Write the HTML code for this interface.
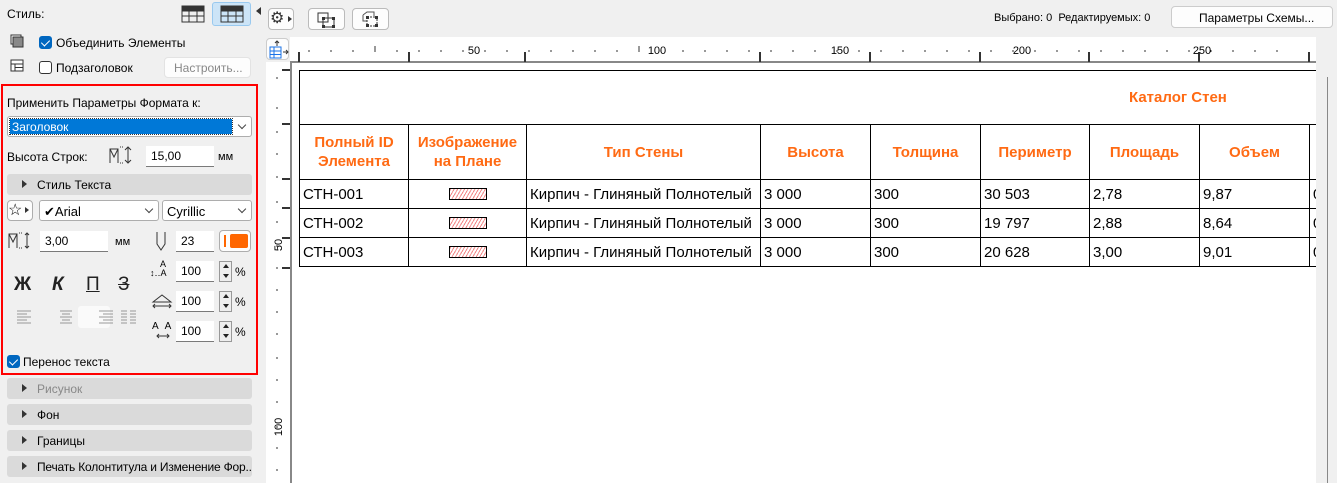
<!DOCTYPE html>
<html><head><meta charset="utf-8"><style>
*{box-sizing:border-box;margin:0;padding:0}
body{width:1337px;height:483px;overflow:hidden;background:#f0f0f0;font-family:"Liberation Sans",sans-serif;font-size:12px;color:#000;position:relative}
.a{position:absolute}
.inp{position:absolute;background:#fff;border-bottom:1px solid #7a7a7a;padding:3px 0 0 5px;font-size:12px;height:21px}
.sel{position:absolute;background:#fff;border:1px solid #adadad;border-radius:3px;height:21px;padding:3px 0 0 4px}
.sel:after{content:"";position:absolute;right:6px;top:5px;width:5px;height:5px;border-right:1px solid #444;border-bottom:1px solid #444;transform:rotate(45deg)}
.cb{position:absolute;width:13px;height:13px;border:1px solid #333;border-radius:3px;background:#fff}
.cb.on{background:#0067c0;border-color:#0067c0}
.cb.on:after{content:"";position:absolute;left:3px;top:1px;width:4px;height:7px;border-right:1.5px solid #fff;border-bottom:1.5px solid #fff;transform:rotate(45deg)}
.sec{position:absolute;left:7px;width:245px;height:21px;background:#dadada;border-radius:3px;padding:4px 0 0 30px;white-space:nowrap;overflow:hidden}
.sec:before{content:"";position:absolute;left:15px;top:6px;border-left:5px solid #333;border-top:4px solid transparent;border-bottom:4px solid transparent}
.spin{position:absolute;width:13px;height:21px;border:1px solid #999;background:#eee}
.spin:before{content:"";position:absolute;left:3px;top:2px;border-bottom:4px solid #222;border-left:3px solid transparent;border-right:3px solid transparent}
.spin:after{content:"";position:absolute;left:3px;top:12px;border-top:4px solid #222;border-left:3px solid transparent;border-right:3px solid transparent}
.btn{position:absolute;background:#fdfdfd;border:1px solid #ccc;border-radius:4px}
table{position:absolute;left:299px;top:70px;border-collapse:collapse;font-size:15px;table-layout:fixed}
td{border:1.5px solid #000;padding:0 3px;white-space:nowrap;overflow:hidden}
.h td{color:#ff6a13;font-weight:bold;font-size:15px;text-align:center;line-height:19px}
.r td{height:29px}
.hat{display:block;margin:0 auto;width:38px;height:12px;border:1px solid #000;background:repeating-linear-gradient(-60deg,#fff 0 2px,#f48a8a 2px 3px)}
</style></head><body>
<div class="a" style="left:7px;top:7px">Стиль:</div>
<svg class="a" style="left:181px;top:5px" width="24" height="18"><g fill="none" stroke="#333"><rect x="1" y="1" width="22" height="16"/><path d="M1 6h22M1 11h22M8 1v16M16 1v16"/></g><rect x="1" y="1" width="22" height="5" fill="#333"/></svg>
<div class="a" style="left:212px;top:2px;width:39px;height:24px;background:#cce4f7;border:1px solid #99c9ef;border-radius:3px"></div>
<svg class="a" style="left:220px;top:5px" width="24" height="18"><g fill="none" stroke="#333"><rect x="1" y="1" width="22" height="16"/><path d="M1 6h22M1 11h22M8 6v11M16 6v11"/></g><rect x="1" y="1" width="22" height="5" fill="#333"/></svg>
<svg class="a" style="left:10px;top:34px" width="14" height="14"><rect x="1" y="1" width="10" height="9" fill="#fff" stroke="#333"/><rect x="3" y="3" width="10" height="10" fill="#888" stroke="#333"/></svg>
<div class="cb on" style="left:39px;top:36px"></div><div class="a" style="left:56px;top:36px">Объединить Элементы</div>
<svg class="a" style="left:10px;top:59px" width="14" height="13"><rect x="1" y="1" width="12" height="11" fill="#fff" stroke="#333"/><path d="M1 5h12M5 5v7M5 8.5h8" stroke="#333" fill="none"/></svg>
<div class="cb" style="left:39px;top:61px"></div><div class="a" style="left:56px;top:61px">Подзаголовок</div>
<div class="btn" style="left:164px;top:57px;width:87px;height:21px;color:#888;padding:3px 0 0 9px;border-color:#e3e3e3">Настроить...</div>
<div class="a" style="left:1px;top:84px;width:257px;height:291px;border:2px solid #f00"></div>
<div class="a" style="left:7px;top:96px">Применить Параметры Формата к:</div>
<div class="sel" style="left:7px;top:116px;width:245px;height:21px;padding:2px"><div style="background:#0078d7;color:#fff;width:222px;height:15px;padding:1px 0 0 2px;outline:1px dotted #333">Заголовок</div></div>
<div class="a" style="left:7px;top:150px">Высота Строк:</div>
<svg class="a" style="left:108px;top:145px" width="26" height="20"><path d="M2 18V4h8v14M2 4l4 8 4-8" fill="none" stroke="#333"/><path d="M12 2h3M12 18h3" stroke="#333" stroke-dasharray="1 1"/><path d="M20 2v16M17 5l3-3 3 3M17 15l3 3 3-3" fill="none" stroke="#333"/></svg>
<div class="inp" style="left:146px;top:146px;width:68px">15,00</div>
<div class="a" style="left:218px;top:151px;font-size:11px">мм</div>
<div class="sec" style="top:174px">Стиль Текста</div>
<div class="btn" style="left:7px;top:200px;width:26px;height:21px;border-color:#adadad"></div>
<div class="a" style="left:8px;top:200px;font-size:16px">☆</div><div class="a" style="left:25px;top:207px;border-left:4px solid #333;border-top:3px solid transparent;border-bottom:3px solid transparent"></div>
<div class="sel" style="left:39px;top:200px;width:120px;font-size:13px">✔Arial</div>
<div class="sel" style="left:162px;top:200px;width:90px;font-size:13px">Cyrillic</div>
<svg class="a" style="left:7px;top:231px" width="26" height="18"><path d="M2 17V3h8v14M2 3l4 8 4-8" fill="none" stroke="#333"/><path d="M12 2h3M12 17h3" stroke="#333" stroke-dasharray="1 1"/><path d="M20 2v15M18 4l2-2 2 2M18 15l2 2 2-2" fill="none" stroke="#333"/></svg>
<div class="inp" style="left:40px;top:231px;width:68px">3,00</div>
<div class="a" style="left:115px;top:236px;font-size:11px">мм</div>
<svg class="a" style="left:155px;top:231px" width="12" height="20"><path d="M2 1v12l4 6 4-6V1" fill="none" stroke="#333"/></svg>
<div class="inp" style="left:176px;top:231px;width:38px">23</div>
<div class="btn" style="left:219px;top:230px;width:32px;height:22px;border-color:#adadad"><div class="a" style="left:4px;top:4px;width:2px;height:12px;background:#f60"></div><div class="a" style="left:10px;top:3px;width:18px;height:14px;background:#f60;border-radius:2px"></div></div>
<div class="a" style="left:14px;top:274px;font-size:19px;font-weight:bold;color:#222">Ж</div>
<div class="a" style="left:52px;top:274px;font-size:19px;font-weight:bold;font-style:italic;color:#222">К</div>
<div class="a" style="left:86px;top:274px;font-size:19px;color:#222;text-decoration:underline">П</div>
<div class="a" style="left:118px;top:274px;font-size:19px;color:#222;text-decoration:line-through">З</div>
<div class="a" style="left:78px;top:306px;width:32px;height:22px;background:#fafafa;border-radius:3px"></div>
<svg class="a" style="left:15px;top:310px" width="125" height="14" stroke="#999"><path d="M2 1h14M2 4h10M2 7h14M2 10h10M2 13h14M45 1h12M47 4h8M45 7h12M47 10h8M45 13h12M84 1h14M88 4h10M84 7h14M88 10h10M84 13h14M106 1h6M106 4h6M106 7h6M106 10h6M106 13h6M115 1h6M115 4h6M115 7h6M115 10h6M115 13h6"/></svg>
<div class="a" style="left:150px;top:260px;font-size:9px;line-height:9px">&nbsp;&nbsp;&nbsp;&nbsp;A<br>↕‥A</div>
<svg class="a" style="left:151px;top:293px" width="22" height="16"><path d="M2 9L11 2l9 7z" fill="none" stroke="#333"/><path d="M2 13h18M4 11l-2 2 2 2M18 11l2 2-2 2" fill="none" stroke="#333"/></svg>
<div class="a" style="left:152px;top:321px;font-size:10px;letter-spacing:6px">AA</div><svg class="a" style="left:156px;top:332px" width="14" height="8"><path d="M1 4h12M3 2L1 4l2 2M11 2l2 2-2 2" fill="none" stroke="#333"/></svg>
<div class="inp" style="left:176px;top:261px;width:38px">100</div><div class="spin" style="left:219px;top:261px"></div><div class="a" style="left:235px;top:265px">%</div>
<div class="inp" style="left:176px;top:291px;width:38px">100</div><div class="spin" style="left:219px;top:291px"></div><div class="a" style="left:235px;top:295px">%</div>
<div class="inp" style="left:176px;top:321px;width:38px">100</div><div class="spin" style="left:219px;top:321px"></div><div class="a" style="left:235px;top:325px">%</div>
<div class="cb on" style="left:7px;top:355px"></div><div class="a" style="left:23px;top:355px">Перенос текста</div>
<div class="sec" style="top:378px;color:#888">Рисунок</div>
<div class="sec" style="top:404px">Фон</div>
<div class="sec" style="top:430px">Границы</div>
<div class="sec" style="top:456px;letter-spacing:-0.2px">Печать Колонтитула и Изменение Фор...</div>
<div class="a" style="left:256px;top:7px;border-right:5px solid #333;border-top:4px solid transparent;border-bottom:4px solid transparent"></div>
<div class="btn" style="left:268px;top:8px;width:26px;height:22px;border-color:#bbb"></div><div class="a" style="left:270px;top:8px;font-size:16px;color:#333">⚙</div><div class="a" style="left:288px;top:16px;border-left:4px solid #333;border-top:3px solid transparent;border-bottom:3px solid transparent"></div>
<div class="btn" style="left:308px;top:8px;width:37px;height:22px;border-color:#bbb"></div>
<svg class="a" style="left:317px;top:12px" width="20" height="16"><rect x="1" y="1" width="10" height="9" fill="none" stroke="#333"/><rect x="6" y="6" width="11" height="9" fill="none" stroke="#333"/><g fill="#333"><rect x="5" y="5" width="3" height="3"/><rect x="15" y="5" width="3" height="3"/><rect x="5" y="13" width="3" height="3"/><rect x="15" y="13" width="3" height="3"/></g></svg>
<div class="btn" style="left:352px;top:8px;width:37px;height:22px;border-color:#bbb"></div>
<svg class="a" style="left:361px;top:11px" width="20" height="17"><path d="M2 4l4-3h7v4M2 4v6h4" fill="none" stroke="#555"/><rect x="6" y="6" width="10" height="9" fill="none" stroke="#333" stroke-dasharray="2 1"/><g fill="#333"><rect x="5" y="5" width="3" height="3"/><rect x="14" y="5" width="3" height="3"/><rect x="5" y="13" width="3" height="3"/><rect x="14" y="13" width="3" height="3"/></g></svg>
<div class="a" style="left:994px;top:12px;font-size:11px">Выбрано: 0&nbsp; Редактируемых: 0</div>
<div class="btn" style="left:1171px;top:6px;width:162px;height:22px;border-color:#ccc;padding:4px 0 0 27px;font-size:12px">Параметры Схемы...</div>
<div class="a" style="left:290px;top:37px;width:1026px;height:446px;background:#fff"></div>
<div class="a" style="left:266px;top:62px;width:24px;height:421px;background:#fff"></div>
<div class="btn" style="left:266px;top:38px;width:23px;height:22px;border-color:#ccc"></div>
<svg class="a" style="left:268px;top:40px" width="22" height="20"><path d="M9 1v5M7 3l2-2 2 2" stroke="#333" fill="none"/><rect x="2" y="7" width="11" height="11" fill="none" stroke="#1a73e8"/><path d="M2 11h11M2 14.5h11M6 7v11" stroke="#1a73e8"/><path d="M15 12h5M18 10l2 2-2 2" stroke="#333" fill="none"/></svg>
<div class="a" style="left:291px;top:61px;width:1025px;height:2px;background:#888"></div>
<div class="a" style="left:290px;top:61px;width:2px;height:422px;background:#888"></div>
<svg class="a" style="left:290px;top:37px" width="1026" height="25">
<g stroke="#333" stroke-width="1">
<path d="M19 13v2M41 13v2M63 13v2M85 9v6M107 13v2M129 13v2M151 13v2M173 13v2M195 13v2M217 13v2M239 13v2M261 13v2M283 13v2M305 13v2M327 13v2M349 9v6M371 13v2M393 13v2M415 13v2M437 13v2M459 13v2M481 13v2M503 13v2M525 13v2M547 13v2M569 13v2M591 13v2M613 13v2M635 13v2M657 13v2M679 13v2M701 13v2M723 13v2M745 13v2M767 13v2M789 13v2M811 13v2M833 13v2M855 13v2M877 13v2M899 13v2M921 13v2M943 13v2M965 13v2M987 13v2"/>
</g>
<g stroke="#333" stroke-width="2"><path d="M9 15v10M119 15v10M235 15v10M470 15v10M580 15v10M690 15v10M799 15v10M909 15v10M1019 15v10"/></g>
<g font-size="11" font-family="Liberation Sans" text-anchor="middle"><text x="184" y="17">50</text><text x="367" y="17">100</text><text x="550" y="17">150</text><text x="732" y="17">200</text><text x="912" y="17">250</text></g>
</svg>
<svg class="a" style="left:266px;top:62px" width="24" height="421">
<g stroke="#333"><path d="M10 16h2M10 46h2M10 70h2M10 92h2M10 115h2M10 140h2M10 160h2M10 184h2M10 206h2M10 228h2M10 250h2M10 272h2M10 296h2M10 318h2M10 340h2M10 365h2M10 386h2M10 408h2"/></g>
<g stroke="#333" stroke-width="2"><path d="M16 8h8M16 62h8M16 117h8M16 146h8M16 176h8M16 206h8"/></g>
<g font-size="11" font-family="Liberation Sans" text-anchor="middle"><text transform="translate(16 183) rotate(-90)">50</text><text transform="translate(16 365) rotate(-90)">100</text></g>
</svg>
<div class="a" style="left:291px;top:63px;width:1025px;height:420px;overflow:hidden">
<table style="left:8px;top:7px;width:1030px">
<colgroup><col style="width:109px"><col style="width:118px"><col style="width:234px"><col style="width:110px"><col style="width:110px"><col style="width:109px"><col style="width:110px"><col style="width:110px"><col style="width:20px"></colgroup>
<tr class="h"><td colspan="9" style="height:54px;text-align:left;padding-left:829px;border-right:none">Каталог Стен</td></tr>
<tr class="h"><td style="height:55px">Полный ID<br>Элемента</td><td>Изображение<br>на Плане</td><td>Тип Стены</td><td>Высота</td><td>Толщина</td><td>Периметр</td><td>Площадь</td><td>Объем</td><td></td></tr>
<tr class="r"><td>СТН-001</td><td><span class="hat"></span></td><td>Кирпич - Глиняный Полнотелый</td><td>3 000</td><td>300</td><td>30 503</td><td>2,78</td><td>9,87</td><td>0</td></tr>
<tr class="r"><td>СТН-002</td><td><span class="hat"></span></td><td>Кирпич - Глиняный Полнотелый</td><td>3 000</td><td>300</td><td>19 797</td><td>2,88</td><td>8,64</td><td>0</td></tr>
<tr class="r"><td>СТН-003</td><td><span class="hat"></span></td><td>Кирпич - Глиняный Полнотелый</td><td>3 000</td><td>300</td><td>20 628</td><td>3,00</td><td>9,01</td><td>0</td></tr>
</table>
</div>
<div class="a" style="left:1316px;top:37px;width:21px;height:446px;background:#f0f0f0"></div>
<div class="a" style="left:1327px;top:77px;width:1px;height:406px;background:#888"></div>
</body></html>
